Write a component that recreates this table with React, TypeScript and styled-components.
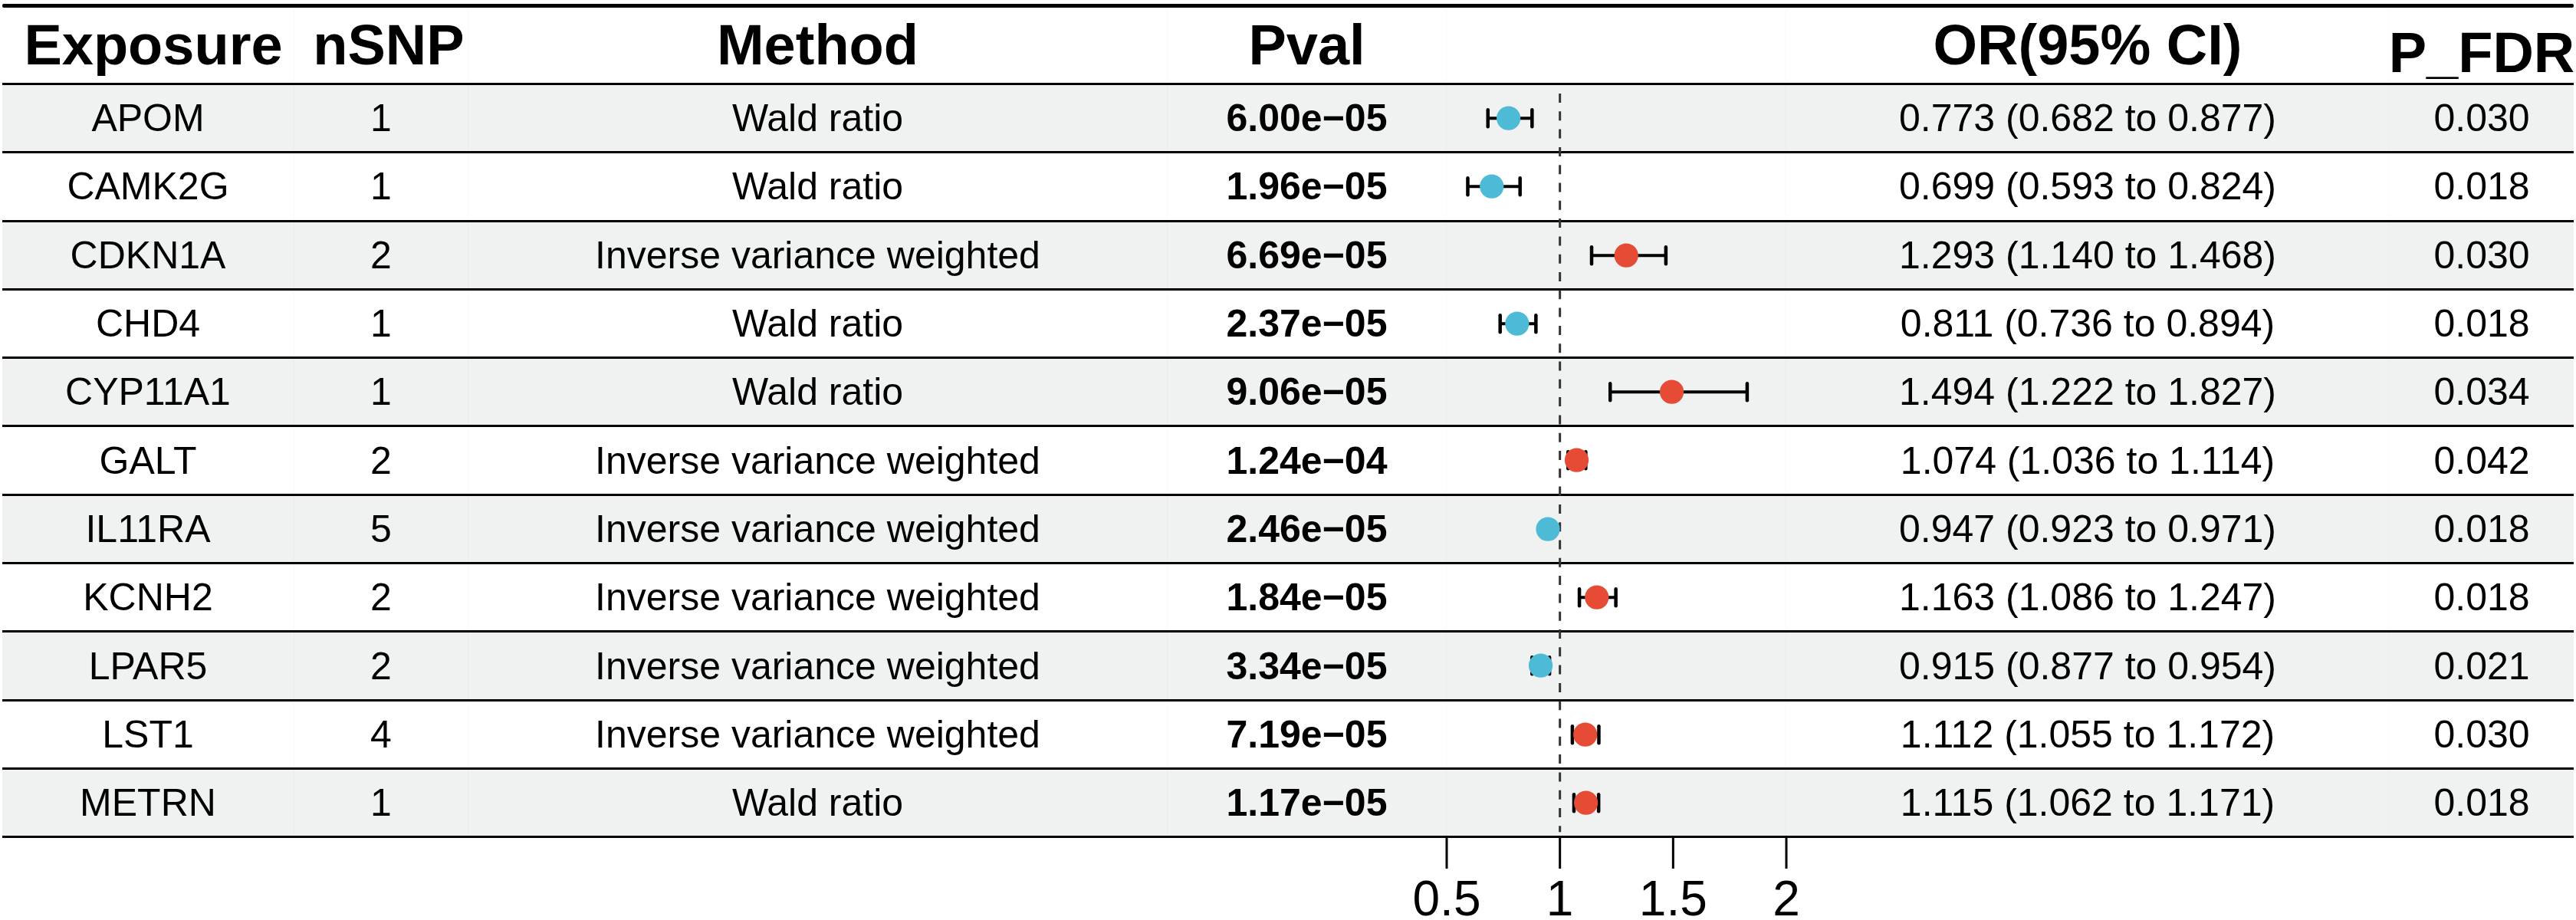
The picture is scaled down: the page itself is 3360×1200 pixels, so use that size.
import React from "react";
import styled, { createGlobalStyle } from "styled-components";

const GlobalStyle = createGlobalStyle`
  html, body { margin: 0; padding: 0; background: #ffffff; }
  body { font-family: "Liberation Sans", Arial, Helvetica, sans-serif; color: #000; }
`;

const COLS = "381px 227px 912px 364px 443px 787px 240px";
const ROW_H = 89.3;
const PLOT_W = 443;
const xOf = (v: number) => ((v - 0.5) / 1.5) * PLOT_W;

const RED = "#E64B35";
const BLUE = "#4DBBD5";
const SHADE = "#eff2f1";
const FAINT = "rgba(0, 0, 0, 0.025)";

type Row = {
  exposure: string;
  nsnp: number;
  method: string;
  pval: string;
  or: number;
  lo: number;
  hi: number;
  fdr: string;
};

const IVW = "Inverse variance weighted";
const WALD = "Wald ratio";

const rows: Row[] = [
  { exposure: "APOM", nsnp: 1, method: WALD, pval: "6.00e−05", or: 0.773, lo: 0.682, hi: 0.877, fdr: "0.030" },
  { exposure: "CAMK2G", nsnp: 1, method: WALD, pval: "1.96e−05", or: 0.699, lo: 0.593, hi: 0.824, fdr: "0.018" },
  { exposure: "CDKN1A", nsnp: 2, method: IVW, pval: "6.69e−05", or: 1.293, lo: 1.14, hi: 1.468, fdr: "0.030" },
  { exposure: "CHD4", nsnp: 1, method: WALD, pval: "2.37e−05", or: 0.811, lo: 0.736, hi: 0.894, fdr: "0.018" },
  { exposure: "CYP11A1", nsnp: 1, method: WALD, pval: "9.06e−05", or: 1.494, lo: 1.222, hi: 1.827, fdr: "0.034" },
  { exposure: "GALT", nsnp: 2, method: IVW, pval: "1.24e−04", or: 1.074, lo: 1.036, hi: 1.114, fdr: "0.042" },
  { exposure: "IL11RA", nsnp: 5, method: IVW, pval: "2.46e−05", or: 0.947, lo: 0.923, hi: 0.971, fdr: "0.018" },
  { exposure: "KCNH2", nsnp: 2, method: IVW, pval: "1.84e−05", or: 1.163, lo: 1.086, hi: 1.247, fdr: "0.018" },
  { exposure: "LPAR5", nsnp: 2, method: IVW, pval: "3.34e−05", or: 0.915, lo: 0.877, hi: 0.954, fdr: "0.021" },
  { exposure: "LST1", nsnp: 4, method: IVW, pval: "7.19e−05", or: 1.112, lo: 1.055, hi: 1.172, fdr: "0.030" },
  { exposure: "METRN", nsnp: 1, method: WALD, pval: "1.17e−05", or: 1.115, lo: 1.062, hi: 1.171, fdr: "0.018" },
];

const fmt = (n: number) => n.toFixed(3);

const Page = styled.div`
  width: 3360px;
  height: 1200px;
  overflow: hidden;
  box-sizing: border-box;
  padding: 5px 3px 0 3px;
  background: #fff;
`;

const TopRule = styled.div`
  height: 5px;
  background: #000;
  border-radius: 2px;
`;

const HeaderRow = styled.div`
  display: grid;
  grid-template-columns: ${COLS};
  height: 101px;
  box-sizing: border-box;
  border-bottom: 3px solid #000;
`;

const HeadCell = styled.div<{ $shift?: number; $dx?: number }>`
  display: flex;
  align-items: center;
  justify-content: center;
  font-size: 74px;
  font-weight: 700;
  line-height: 1;
  white-space: nowrap;
  padding-top: ${(p) => (p.$shift ?? 0) * 2}px;
  padding-left: ${(p) => (p.$dx ?? 0) * 2}px;
  border-right: 1px solid ${FAINT};
  &:last-child { border-right: none; }
`;

const Body = styled.div`
  position: relative;
`;

const DataRow = styled.div<{ $shaded: boolean }>`
  display: grid;
  grid-template-columns: ${COLS};
  height: ${ROW_H}px;
  box-sizing: border-box;
  border-bottom: 3px solid #000;
  background: ${(p) => (p.$shaded ? SHADE : "#fff")};
`;

const Cell = styled.div<{ $bold?: boolean }>`
  display: flex;
  align-items: center;
  justify-content: center;
  font-size: 50px;
  font-weight: ${(p) => (p.$bold ? 700 : 400)};
  line-height: 1;
  white-space: nowrap;
  border-right: 1px solid ${FAINT};
  &:last-child { border-right: none; }
`;

const PlotCell = styled.div`
  position: relative;
  z-index: 2;
  border-right: 1px solid ${FAINT};
`;

const RefLine = styled.svg`
  position: absolute;
  left: ${381 + 227 + 912 + 364}px;
  top: 0;
  z-index: 1;
  overflow: visible;
  pointer-events: none;
`;

const AxisRow = styled.div`
  display: grid;
  grid-template-columns: ${COLS};
  height: 107px;
`;

const AxisSvg = styled.svg`
  display: block;
  overflow: visible;
`;

const AxisLabel = styled.text`
  font-family: "Liberation Sans", Arial, Helvetica, sans-serif;
  font-size: 64px;
  fill: #000;
`;

function CI({ r }: { r: Row }) {
  const h = ROW_H - 3;
  const cy = h / 2;
  const x0 = xOf(r.lo);
  const x1 = xOf(r.hi);
  const xc = xOf(r.or);
  const color = r.or >= 1 ? RED : BLUE;
  return (
    <svg width={PLOT_W} height={h} style={{ display: "block", overflow: "visible" }}>
      <line x1={x0} y1={cy} x2={x1} y2={cy} stroke="#000" strokeWidth={4} />
      <line x1={x0} y1={cy - 11} x2={x0} y2={cy + 11} stroke="#000" strokeWidth={4.5} strokeLinecap="round" />
      <line x1={x1} y1={cy - 11} x2={x1} y2={cy + 11} stroke="#000" strokeWidth={4.5} strokeLinecap="round" />
      <circle cx={xc} cy={cy} r={15.6} fill={color} />
    </svg>
  );
}

export default function App() {
  const bodyH = ROW_H * rows.length;
  const ticks = [0.5, 1, 1.5, 2];
  return (
    <>
      <GlobalStyle />
      <Page>
        <TopRule />
        <HeaderRow>
          <HeadCell $dx={7}>Exposure</HeadCell>
          <HeadCell $dx={10}>nSNP</HeadCell>
          <HeadCell>Method</HeadCell>
          <HeadCell>Pval</HeadCell>
          <HeadCell />
          <HeadCell>OR(95% CI)</HeadCell>
          <HeadCell $shift={10}>P_FDR</HeadCell>
        </HeaderRow>
        <Body>
          <RefLine width={PLOT_W} height={bodyH}>
            <line
              x1={xOf(1)}
              y1={11}
              x2={xOf(1)}
              y2={bodyH - 8}
              stroke="#333"
              strokeWidth={3}
              strokeDasharray="12 11.3"
            />
          </RefLine>
          {rows.map((r, i) => (
            <DataRow key={r.exposure} $shaded={i % 2 === 0}>
              <Cell>{r.exposure}</Cell>
              <Cell>{r.nsnp}</Cell>
              <Cell>{r.method}</Cell>
              <Cell $bold>{r.pval}</Cell>
              <PlotCell>
                <CI r={r} />
              </PlotCell>
              <Cell>{`${fmt(r.or)} (${fmt(r.lo)} to ${fmt(r.hi)})`}</Cell>
              <Cell>{r.fdr}</Cell>
            </DataRow>
          ))}
        </Body>
        <AxisRow>
          <div />
          <div />
          <div />
          <div />
          <div>
            <AxisSvg width={PLOT_W} height={107}>
              {ticks.map((t) => (
                <g key={t}>
                  <line x1={xOf(t)} y1={0} x2={xOf(t)} y2={40} stroke="#000" strokeWidth={3} />
                  <AxisLabel x={xOf(t)} y={101} textAnchor="middle">
                    {String(t)}
                  </AxisLabel>
                </g>
              ))}
            </AxisSvg>
          </div>
          <div />
          <div />
        </AxisRow>
      </Page>
    </>
  );
}
